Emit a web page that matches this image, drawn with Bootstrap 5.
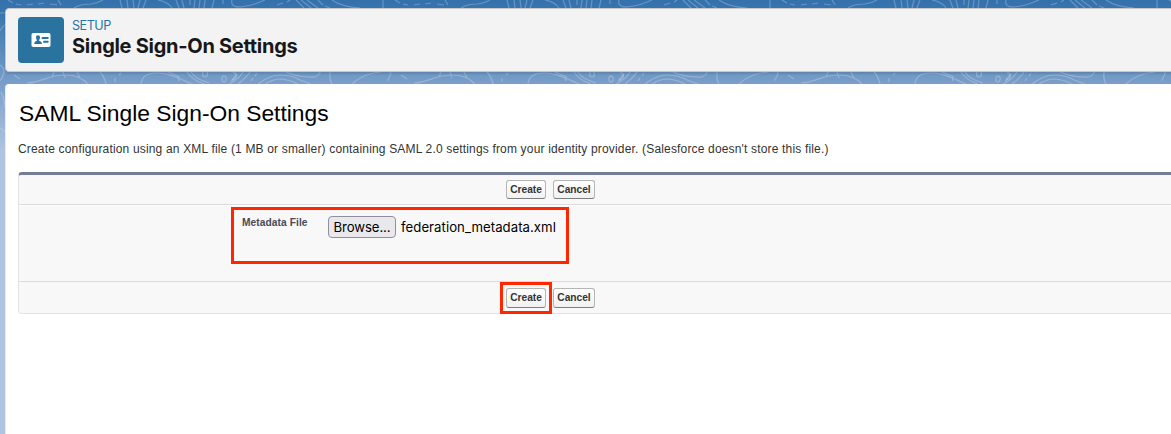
<!DOCTYPE html>
<html lang="en">
<head>
<meta charset="utf-8">
<title>Single Sign-On Settings</title>
<link href="https://cdn.jsdelivr.net/npm/bootstrap@5.3.0/dist/css/bootstrap.min.css" rel="stylesheet">
<style>
body{height:434px;overflow:hidden;font-family:"Liberation Sans",Arial,sans-serif;font-size:12px;color:#3e3e3c;background:linear-gradient(#3471ac 0,#3b76b0 15px,#749bc7 78px,#b0c4df 150px,#b0c4df 100%)}
.backdrop{z-index:-1;pointer-events:none}
.page-head{margin:8px 0 0 5px;height:64px;width:1180px;background:#f3f3f3;border:1px solid #c9c9c9;border-radius:4px;padding:8px 12px;box-shadow:0 2px 2px rgba(0,0,0,.12)}
.head-icon{width:46px;height:46px;background:#2a739e;border-radius:4px;flex:none}
.head-text{margin-left:8px;font-family:Inter,sans-serif;white-space:nowrap}
.kicker{font-family:Inter,sans-serif;font-size:12.6px;line-height:17px;color:#2574a9;letter-spacing:-.5px}
.head-title{font-size:20px;line-height:25px;font-weight:700;color:#181818;margin:0;letter-spacing:-.28px}
.panel{margin:12px 0 0 5px;height:360px;width:1180px;border-radius:4px 0 0 0;border-left:1px solid #e8ebf0;padding:0 0 0 12px}
.main-title{font-size:22.8px;line-height:28px;font-weight:400;color:#000;margin:0 0 0 1px;padding-top:15px;white-space:nowrap}
.intro{margin:14px 0 0;line-height:16px;white-space:nowrap;color:#333;letter-spacing:.168px}
.block{margin-top:15px;border:1px solid #e3e3e3;border-top:3px solid #747e96;border-radius:4px;background:#f8f8f8;height:142px}
.bar{height:30px;padding-left:487px;border-bottom:1px solid #dbdbdb;gap:7px}
.bar-end{border:0;height:31px;padding-left:481px;gap:1px}
.act{font-size:10.2px;font-weight:700;line-height:12px;color:#333;border:1px solid #b5b5b5;border-bottom-color:#7f7f7f;border-radius:3px;background:linear-gradient(#fff,#f1f1f1);height:19px;padding:0;text-align:center}
.act-create{width:40px}.act-cancel{width:42px}
.bar-end .act{height:20px}
.fields{height:77px;border-top:1px solid #fff;border-bottom:1px solid #dbdbdb;padding:1px 0 0 212px}
.mark-red{border:3px solid #ff2600}
.file-box{width:338px;height:57px;padding:6px 0 0 8px}
.file-label{width:86px;font-size:10.2px;line-height:14px;font-weight:700;color:#4a4a56;letter-spacing:.08px}
.file-pick{width:68px;height:22px;border:1px solid #8f8f9d;border-radius:4px;background:#e9e9ed;padding:0;color:#000}
.file-pick,.file-name{font-family:Inter,sans-serif;font-size:13.2px;line-height:20px;white-space:nowrap;letter-spacing:-.1px}
.file-name{margin-left:5px;color:#000;padding-top:1px;letter-spacing:.04px}
.create-mark{width:52px;height:32px}
</style>
</head>
<body>
<svg class="backdrop position-absolute top-0 start-0" width="1171" height="434" aria-hidden="true">
<defs>
<pattern id="contours" width="387" height="434" patternUnits="userSpaceOnUse">
<g fill="none" stroke="#fff" stroke-opacity=".24" stroke-width="1.2">
<path d="M8 0L13 3M16 4L21 5M27 5L33 4M38 4L44 3M50 4L57 5M58 0L61 5M74 8Q80 4 91 4Q98 3 103 0M120 0L122 8M127 0L128 8M133 0L134 8M138 8L140 0M143 8L146 0M158 0Q168 2 172 8M176 0L179 8M182 0L184 8M190 0V5M195 0L194 8M200 0L199 8M205 0L204 8M212 8L214 0M223 0V4M232 0Q230 7 240 7Q251 6 260 2L265 0M277 5L283 3M287 2L290 0M296 0L304 8M301 0L311 8M307 0L318 8M318 0L323 5M325 6L330 8M332 0Q342 7 360 8M383 0V8"/>
<path d="M14 75L20 79M27 83C40 83 48 75 65 75Q80 75 88 84M52 77L54 72M63 72L65 78M77 72L80 78M100 72Q104 76 106 84M115 78V82M119 75L121 73M141 84Q142 73 157 73C170 73 180 79 192 84M168 72L180 77M178 77L179 81M187 72Q192 80 204 84M191 72Q195 79 209 83M232 80L237 74M238 84Q247 77 250 72M229 84Q239 79 243 72M251 81L253 78M255 76L257 73M258 84Q270 75 280 75Q292 75 300 80L311 84M265 84Q273 79 281 79Q291 80 298 84M286 72Q301 78 315 77Q321 74 320 71M330 72Q329 79 332 84M352 84Q364 73 381 72"/>
<ellipse cx="205" cy="74" rx="2.5" ry="3"/><ellipse cx="224" cy="79" rx="2.2" ry="2.8"/><path d="M233 73Q237 72 236 78L231 81"/>
<path d="M0 13H5M0 31Q7 18 18 26M0 65Q8 70 0 81M1 92Q5 100 5 108M0 128Q4 130 6 133" stroke-width="1.1"/>
</g>
</pattern>
</defs>
<rect width="1171" height="434" fill="url(#contours)"/>
</svg>

<header class="page-head d-flex align-items-start">
  <div class="head-icon d-flex align-items-center justify-content-center">
    <svg width="20" height="14" viewBox="0 0 20 14" aria-hidden="true">
      <rect x=".5" y="0" width="19" height="14" rx="1.8" fill="#fff"/>
      <path d="M7 2.3c1.300 0 2 .9 2 2.200 0 1.200-.5 2-.9 2.600v.7c1.500.6 2.800 1.200 2.800 3.100H3.200c0-1.900 1.200-2.500 2.700-3.100v-.7C5.500 6.500 5 5.700 5 4.500c0-1.300.7-2.200 2-2.200z" fill="#2a739e"/>
      <path d="M11.500 5h5.300M13 8.700h3.800" stroke="#2a739e" stroke-width="1.900" stroke-linecap="round"/>
    </svg>
  </div>
  <div class="head-text">
    <div class="kicker">SETUP</div>
    <h1 class="head-title">Single Sign-On Settings</h1>
  </div>
</header>

<main class="panel bg-white">
  <h2 class="main-title">SAML Single Sign-On Settings</h2>
  <p class="intro">Create configuration using an XML file (1 MB or smaller) containing SAML 2.0 settings from your identity provider. (Salesforce doesn't store this file.)</p>
  <form class="block">
    <div class="bar d-flex align-items-center">
      <button type="button" class="act act-create">Create</button>
      <button type="button" class="act act-cancel">Cancel</button>
    </div>
    <div class="fields">
      <div class="file-box mark-red d-flex align-items-start">
        <label class="file-label">Metadata File</label>
        <button type="button" class="file-pick">Browse...</button>
        <span class="file-name">federation_metadata.xml</span>
      </div>
    </div>
    <div class="bar bar-end d-flex align-items-center">
      <div class="create-mark mark-red d-flex align-items-center justify-content-center">
        <button type="button" class="act act-create">Create</button>
      </div>
      <button type="button" class="act act-cancel">Cancel</button>
    </div>
  </form>
</main>
<script src="https://cdn.jsdelivr.net/npm/bootstrap@5.3.0/dist/js/bootstrap.bundle.min.js"></script>
</body>
</html>
